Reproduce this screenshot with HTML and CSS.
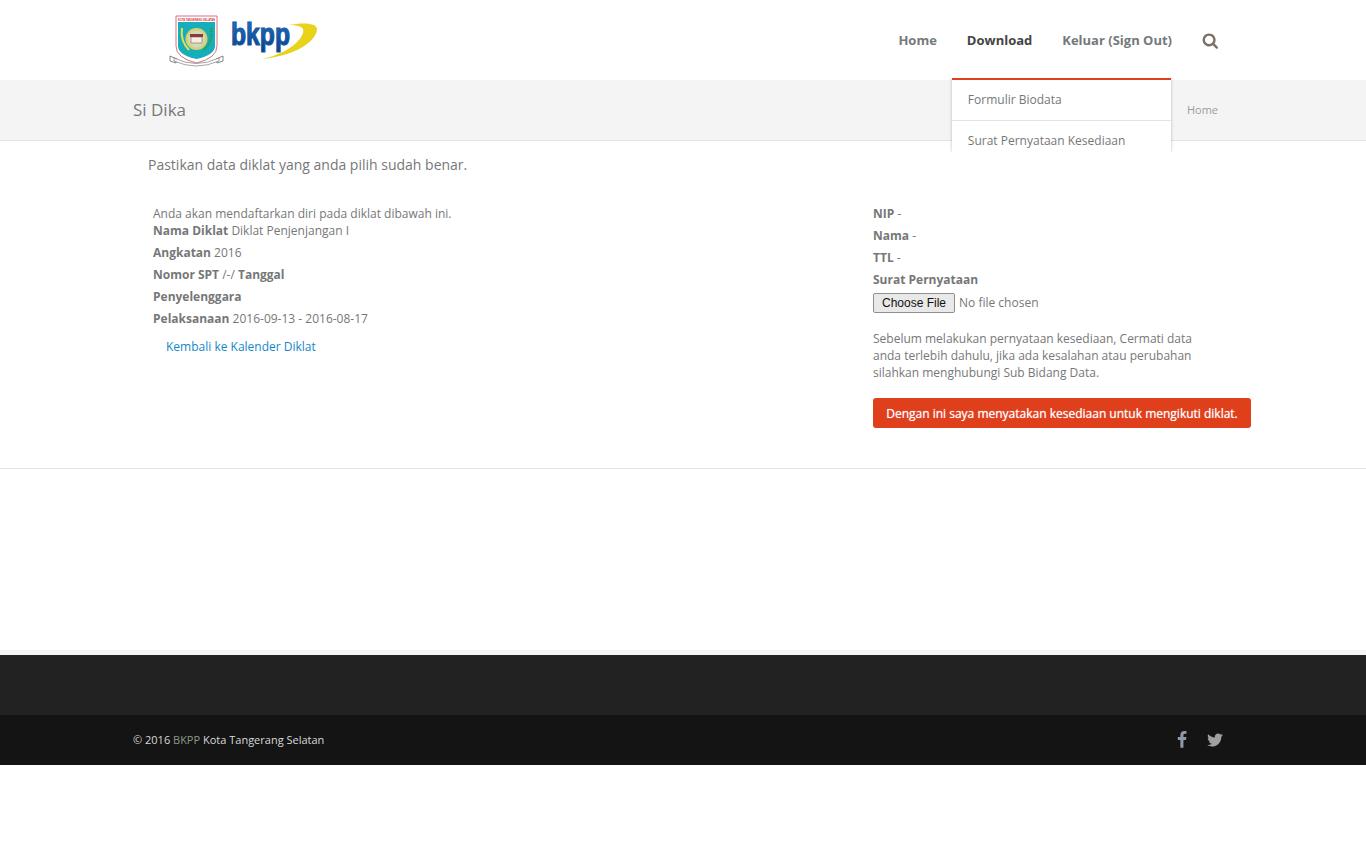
FILE: index.html
```html
<!DOCTYPE html>
<html lang="id">
<head>
    <meta charset="UTF-8">
    <meta name="viewport" content="width=device-width, initial-scale=1.0">
    <title>Si Dika</title>
    <link rel="stylesheet" href="styles.css">
</head>
<body>
    <header class="header">
        <div class="container header-row">
            <a href="#" class="logo">
                <svg width="150" height="52" viewBox="0 0 150 52" aria-label="BKPP">
                    <defs>
                        <linearGradient id="biru" x1="0" y1="0" x2="0" y2="1">
                            <stop offset="0" stop-color="#1f7cc8"/>
                            <stop offset="1" stop-color="#0c3a86"/>
                        </linearGradient>
                    </defs>
                    <!-- lambang kota -->
                    <path d="M1 41 L8 44 L7 48 L1 46 Z M54 41 L47 44 L48 48 L54 46 Z" fill="#fff" stroke="#555" stroke-width=".7"/>
                    <path d="M7 1 H48 V31 Q48 43 27.500 48 Q7 43 7 31 Z" fill="#fff" stroke="#c9505a" stroke-width=".8"/>
                    <text x="9" y="5.500" font-size="3" font-weight="700" fill="#d8323c" textLength="37" lengthAdjust="spacingAndGlyphs" class="logo-mini">KOTA TANGERANG SELATAN</text>
                    <path d="M9 7 H46 V31 Q46 40 27.500 44 Q9 40 9 31 Z" fill="#16aebb"/>
                    <circle cx="27.500" cy="24" r="11" fill="#d9cf7a"/>
                    <circle cx="27.500" cy="24" r="8.500" fill="#cfdcb8"/>
                    <rect x="21" y="19" width="13" height="3" fill="#8e3a3a"/>
                    <rect x="22" y="22" width="11" height="6" fill="#f3efe2" stroke="#7a4a3a" stroke-width=".5"/>
                    <path d="M13 13 Q11 26 20 35" fill="none" stroke="#e6e04a" stroke-width="2"/>
                    <path d="M42 13 Q44 26 35 35" fill="none" stroke="#2f9a4e" stroke-width="2.500" stroke-dasharray="1.500 1"/>
                    <path d="M5 43 Q27 54 50 43 L50 46 Q27 56 5 46 Z" fill="#fff" stroke="#666" stroke-width=".6"/>
                    <!-- tulisan bkpp -->
                    <path d="M93 44 C118 42 146 30 148 15 C149 8 136 7 119 10 C130 10 136 12 134 18 C130 30 112 40 93 44 Z" fill="#e9d21a"/>
                    <text x="62" y="30" textLength="59" lengthAdjust="spacingAndGlyphs" class="logo-word" fill="url(#biru)">bkpp</text>
                </svg>
            </a>
            <nav>
                <ul class="nav">
                    <li><a href="#">Home</a></li>
                    <li class="has-menu active">
                        <a href="#">Download</a>
                        <div class="dropdown">
                            <a href="#">Formulir Biodata</a>
                            <a href="#">Surat Pernyataan Kesediaan</a>
                        </div>
                    </li>
                    <li><a href="#">Keluar (Sign Out)</a></li>
                    <li>
                        <a href="#" class="search-btn" aria-label="Cari">
                            <svg class="icon-search" viewBox="0 0 1728 1792"><path d="M1216 832q0-185-131.500-316.500t-316.500-131.500-316.500 131.500-131.500 316.500 131.500 316.500 316.500 131.500 316.500-131.500 131.500-316.500zm512 832q0 52-38 90t-90 38q-54 0-90-38l-343-342q-179 124-399 124-143 0-273.500-55.500t-225-150-150-225-55.500-273.500 55.500-273.500 150-225 225-150 273.500-55.500 273.500 55.500 225 150 150 225 55.500 273.500q0 220-124 399l343 343q37 37 37 90z"/></svg>
                        </a>
                    </li>
                </ul>
            </nav>
        </div>
    </header>

    <div class="breadcrumbs">
        <div class="container breadcrumbs-row">
            <h1>Si Dika</h1>
            <a href="#">Home</a>
        </div>
    </div>

    <main class="content">
        <div class="container">
            <p class="lead">Pastikan data diklat yang anda pilih sudah benar.</p>
            <div class="columns">
                <div class="col-left">
                    <p class="intro">Anda akan mendaftarkan diri pada diklat dibawah ini.</p>
                    <p class="line"><b>Nama Diklat</b> Diklat Penjenjangan I</p>
                    <p class="line"><b>Angkatan</b> 2016</p>
                    <p class="line"><b>Nomor SPT</b> /-/ <b>Tanggal</b></p>
                    <p class="line"><b>Penyelenggara</b></p>
                    <p class="line"><b>Pelaksanaan</b> 2016-09-13 - 2016-08-17</p>
                    <a href="#" class="back-link">Kembali ke Kalender Diklat</a>
                </div>
                <form class="col-right">
                    <p class="line"><b>NIP</b> -</p>
                    <p class="line"><b>Nama</b> -</p>
                    <p class="line"><b>TTL</b> -</p>
                    <p class="line"><b>Surat Pernyataan</b></p>
                    <input type="file" class="file-input">
                    <p class="note">Sebelum melakukan pernyataan kesediaan, Cermati data<br>anda terlebih dahulu, jika ada kesalahan atau perubahan<br>silahkan menghubungi Sub Bidang Data.</p>
                    <button type="submit" class="btn-red">Dengan ini saya menyatakan kesediaan untuk mengikuti diklat.</button>
                </form>
            </div>
        </div>
    </main>

    <footer class="footer">
        <div class="footer-top"></div>
        <div class="copyright">
            <div class="container copyright-row">
                <p>&copy; 2016 <a href="#">BKPP</a> Kota Tangerang Selatan</p>
                <div class="social">
                    <a href="#" aria-label="Facebook"><svg class="icon-fb" viewBox="0 0 1792 1792"><path d="M1343 12v264h-157q-86 0-116 36t-30 108v189h293l-39 296h-254v759h-306v-759h-255v-296h255v-218q0-186 104-288.500t277-102.500q147 0 228 12z"/></svg></a>
                    <a href="#" aria-label="Twitter"><svg class="icon-tw" viewBox="0 0 1792 1792"><path d="M1684 408q-67 98-162 167 1 14 1 42 0 130-38 259.500t-115.500 248.500-184.500 210.500-258 146-323 54.500q-271 0-496-145 35 4 78 4 225 0 401-138-105-2-188-64.500t-114-159.500q33 5 61 5 43 0 85-11-112-23-185.500-111.500t-73.500-205.500v-4q68 38 146 41-66-44-105-115t-39-154q0-88 44-163 121 149 294.500 238.500t371.500 99.500q-8-38-8-74 0-134 94.500-228.500t228.500-94.500q140 0 236 102 109-21 200-76-35 109-138 174 89-10 178-48z"/></svg></a>
                </div>
            </div>
        </div>
    </footer>
</body>
</html>
```

FILE: styles.css
```css
* {
    box-sizing: border-box;
}
body {
    font-family: "Open Sans", Arial, sans-serif;
    font-size: 12px;
    line-height: 22px;
    color: #777;
    background-color: #fff;
    margin: 0;
}
a {
    text-decoration: none;
    color: inherit;
}
p {
    margin: 0;
}
.container {
    width: 1100px;
    margin: 0 auto;
}

/* Header */
.header {
    height: 80px;
    background-color: #fff;
}
.header-row {
    display: flex;
    justify-content: space-between;
    padding-right: 15px;
}
.logo {
    display: block;
    margin: 15px 0 0 36px;
    height: 52px;
}
.logo svg {
    display: block;
}
.logo-mini {
    font-family: "Liberation Sans", Arial, sans-serif;
}
.logo-word {
    font-family: "Liberation Sans", Arial, sans-serif;
    font-size: 32px;
    font-weight: 700;
    stroke: #15589f;
    stroke-width: 1.2px;
}
.nav {
    display: flex;
    gap: 30px;
    list-style: none;
    margin: 0;
    padding: 0;
}
.nav > li {
    position: relative;
    height: 80px;
    line-height: 80px;
    font-size: 13px;
    font-weight: 700;
    color: #74797c;
}
.nav > li.active {
    color: #444;
}
.search-btn {
    display: flex;
    align-items: center;
    height: 80px;
}
.icon-search {
    width: 16px;
    height: 17px;
    fill: #7b6f68;
}
.dropdown {
    position: absolute;
    top: 78px;
    left: -15px;
    width: 219px;
    height: 74px;
    overflow: hidden;
    background-color: #fff;
    border-top: 2px solid #e03f1c;
    box-shadow: 0 0 3px rgba(0, 0, 0, 0.25);
    clip-path: inset(0 -4px 0 -4px);
    z-index: 10;
    font-size: 12px;
    font-weight: 400;
    line-height: 20px;
    color: #777;
}
.dropdown a {
    display: block;
    padding: 10px 16px;
    height: 41px;
    border-bottom: 1px solid #e4e4e4;
}

/* Breadcrumbs */
.breadcrumbs {
    height: 61px;
    background-color: #f4f4f4;
    border-bottom: 1px solid #e2e2e2;
}
.breadcrumbs-row {
    display: flex;
    justify-content: space-between;
    align-items: center;
    height: 60px;
    padding-right: 15px;
}
.breadcrumbs h1 {
    margin: 0;
    font-size: 17px;
    font-weight: 400;
    color: #74797c;
}
.breadcrumbs a {
    font-size: 11px;
    color: #a09a9a;
}

/* Contenido */
.content {
    height: 328px;
    border-bottom: 1px solid #e4e4e4;
    padding-top: 13px;
}
.lead {
    font-size: 14px;
    margin-left: 15px;
}
.columns {
    display: flex;
    margin-top: 27px;
}
.col-left {
    flex: none;
    width: 740px;
    padding: 2px 0 0 20px;
}
.col-right {
    flex: none;
    width: 378px;
}
.intro {
    line-height: 17px;
    margin-bottom: -2px;
}
.back-link {
    display: block;
    margin: 6px 0 0 13px;
    color: #1587c8;
}
.file-input {
    display: block;
    font-family: "Open Sans", Arial, sans-serif;
    font-size: 12px;
    color: #777;
    height: 22px;
    margin-top: 2px;
}
.file-input::file-selector-button {
    font-family: "Liberation Sans", Arial, sans-serif;
    font-size: 12px;
    height: 20px;
    padding: 1px 8px;
    background-color: #e9e9e9;
    border: 1px solid #8f8f8f;
    border-radius: 2px;
    color: #111;
}
.note {
    margin-top: 15px;
    line-height: 17px;
}
.btn-red {
    display: block;
    width: 378px;
    height: 30px;
    margin-top: 17px;
    background-color: #e03f1c;
    color: #fff;
    border: none;
    border-radius: 3px;
    font-family: "Open Sans", Arial, sans-serif;
    font-size: 12px;
    font-weight: 400;
    text-shadow: 0 0 1px rgba(255, 255, 255, 0.7);
    padding: 0;
    cursor: pointer;
}

/* Footer */
.footer {
    margin-top: 181px;
    border-top: 5px solid #f4f4f4;
}
.footer-top {
    height: 60px;
    background-color: #222;
}
.copyright {
    height: 50px;
    background-color: #141414;
}
.copyright-row {
    display: flex;
    justify-content: space-between;
    align-items: center;
    height: 50px;
    font-size: 11px;
    color: #d8d8d8;
}
.copyright a {
    color: #8a9a8a;
}
.social {
    display: flex;
    align-items: center;
    gap: 15px;
    padding-right: 9px;
}
.social a {
    display: block;
    height: 18px;
}
.icon-fb {
    width: 18px;
    height: 18px;
    fill: #8e9aa6;
}
.icon-tw {
    width: 18px;
    height: 18px;
    fill: #a0a0a0;
}
```
